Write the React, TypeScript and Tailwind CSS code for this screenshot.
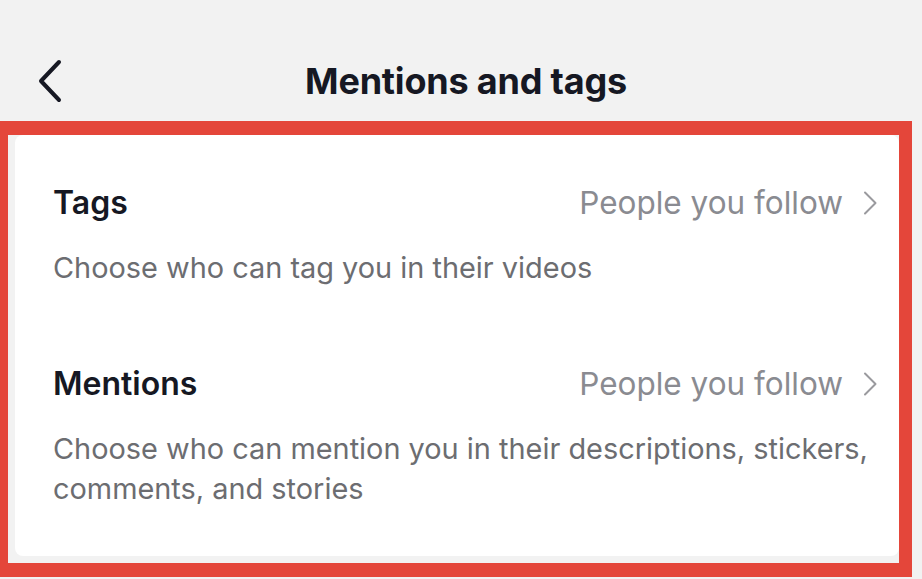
import React from 'react';

interface SettingRowProps {
  title: string;
  value: string;
  description: React.ReactNode;
  className?: string;
}

const ChevronRight = () => (
  <svg width="16" height="24" viewBox="0 0 16 24" fill="none" className="ml-[19px]">
    <path d="M3 1.5 L13.5 12 L3 22.5" stroke="#9a9a9e" strokeWidth="2" strokeLinecap="round" strokeLinejoin="round" />
  </svg>
);

const SettingRow = ({ title, value, description, className }: SettingRowProps) => (
  <div className={className}>
    <div className="flex items-center justify-between h-10">
      <span className="text-[32px] font-semibold text-[#161823]">{title}</span>
      <div className="flex items-center">
        <span className="text-[31.5px] text-[#8a8b91]">{value}</span>
        <ChevronRight />
      </div>
    </div>
    <p className="mt-[25px] -mr-2 text-[28.9px] leading-[40px] text-[#6c6d71]">{description}</p>
  </div>
);

export default function App() {
  return (
    <div
      className="w-[922px] h-[579px] bg-[#f2f2f2] overflow-hidden"
      style={{ fontFamily: 'Inter, "Noto Sans", sans-serif' }}
    >
      {/* header */}
      <div className="h-[121px] pt-10 grid grid-cols-[1fr_auto_1fr] items-center">
        <div className="pl-[36px] flex items-center h-[81px]">
          <svg width="28" height="44" viewBox="0 0 28 44" fill="none">
            <path d="M23 3 L5 22 L23 41" stroke="#161823" strokeWidth="4" strokeLinecap="round" strokeLinejoin="round" />
          </svg>
        </div>
        <h1 className="text-[36px] font-bold text-[#161823] tracking-[-0.2px] ml-[10px]">Mentions and tags</h1>
        <div />
      </div>

      {/* highlighted section */}
      <div className="w-[912px] h-[456px] border-t-[14px] border-l-[8px] border-r-[13px] border-b-[14px] border-[#e4463a] pl-[7px] pb-[7px]">
        <div className="h-full bg-white rounded-lg pl-[38px] pr-[21px] pt-[48px]">
          <SettingRow
            title="Tags"
            value="People you follow"
            description="Choose who can tag you in their videos"
          />
          <SettingRow
            className="mt-[76px]"
            title="Mentions"
            value="People you follow"
            description="Choose who can mention you in their descriptions, stickers, comments, and stories"
          />
        </div>
      </div>
    </div>
  );
}
